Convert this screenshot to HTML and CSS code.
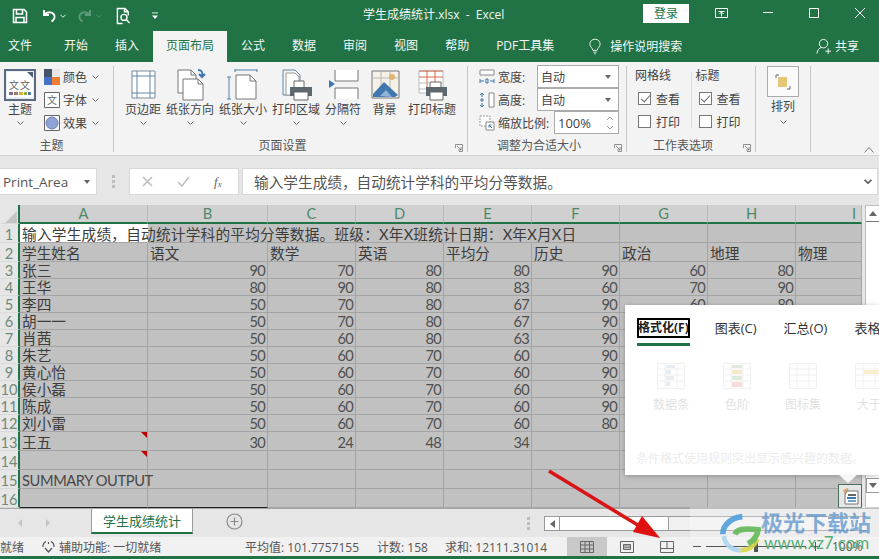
FILE: index.html
```html
<!DOCTYPE html>
<html lang="zh-CN">
<head>
<meta charset="utf-8">
<title>学生成绩统计.xlsx - Excel</title>
<link rel="stylesheet" href="styles.css">
</head>
<body>
<div class="app">
  <header class="titlebar">
    <div class="qat">
      <svg class="q-save" viewBox="0 0 16 16"><path d="M1.500 1.500h10.500l2.500 2.500v10.500h-13z"/><path d="M4.500 2v4h6V2M4 14.500v-5h8v5"/></svg>
      <svg class="q-undo" viewBox="0 0 16 16"><path d="M3 2v5h5M3.500 6.500C6 3.500 11 3.500 13 6.500c1.500 2.500 0 5.500-2.500 7"/></svg>
      <svg class="q-chev" viewBox="0 0 7 4"><path d="M.5.5l3 3 3-3"/></svg>
      <svg class="q-redo" viewBox="0 0 16 16"><path d="M13 2v5H8M12.500 6.500C10 3.500 5 3.500 3 6.500c-1.500 2.500 0 5.500 2.500 7"/></svg>
      <svg class="q-chev dim" viewBox="0 0 7 4"><path d="M.5.5l3 3 3-3"/></svg>
      <svg class="q-prev" viewBox="0 0 16 19"><path d="M7 17.500H1.500v-16h8l3.500 3.500v4M9 1.500V5h4"/><circle cx="8.500" cy="11" r="3.200"/><path d="M11 13.500l3.500 3.500"/></svg>
      <svg class="q-cust" viewBox="0 0 7 8"><path class="w" d="M0 1h7"/><path class="t" d="M0 4h7L3.500 8z"/></svg>
    </div>
    <div class="doc-title">学生成绩统计.xlsx&nbsp; - &nbsp;Excel</div>
    <div class="winctl">
      <button class="login">登录</button>
      <svg class="wc wc-r" viewBox="0 0 13 12"><path d="M.5 1.500h12v9H.5zM3.500 4.500h6M6.500 4.500v5M4.500 7l2-2 2 2"/></svg>
      <svg class="wc" viewBox="0 0 12 12"><path d="M1 5.500h10"/></svg>
      <svg class="wc" viewBox="0 0 12 12"><path d="M1.500 1.500h9v9h-9z"/></svg>
      <svg class="wc" viewBox="0 0 12 12"><path d="M1 1l10 10M11 1L1 11"/></svg>
    </div>
  </header>

  <nav class="tabs">
    <span class="tab first">文件</span>
    <span class="tab">开始</span>
    <span class="tab">插入</span>
    <span class="tab active">页面布局</span>
    <span class="tab">公式</span>
    <span class="tab">数据</span>
    <span class="tab">审阅</span>
    <span class="tab">视图</span>
    <span class="tab">帮助</span>
    <span class="tab">PDF工具集</span>
    <span class="tell">
      <svg class="bulb" viewBox="0 0 14 18"><path d="M4.500 13.500C4 10.500 1 9.500 1 6a6 5.500 0 0 1 12 0c0 3.500-3 4.500-3.500 7.500zM5 15.500h4M6 17.500h2"/></svg>
      操作说明搜索
    </span>
    <span class="share">
      <svg class="user" viewBox="0 0 16 17"><circle cx="8" cy="5.500" r="4.500"/><path d="M1 16c.5-4 2.500-6 5-6.500M10 13.500h6M13 10.500v6"/></svg>
      共享
    </span>
  </nav>

  <section class="ribbon">
    <div class="group g-theme">
      <div class="gbody themes">
        <div class="rbtn theme-btn">
          <svg class="ic-theme" viewBox="0 0 32 32"><path class="fr" d="M1 1h30v30H1z"/><path d="M3 3h21l5 5v20H3z" fill="#fff"/><path d="M23 3h6v6z" fill="#51607a"/><text x="5" y="20" class="gl">文</text><text x="16" y="20" class="gl">文</text><path d="M5 23h4v3H5z" fill="#7d6a9c"/><path d="M10 23h4v3h-4z" fill="#9c7d5f"/><path d="M15 23h4v3h-4z" fill="#d8b23a"/><path d="M20 23h3v3h-3z" fill="#8db04a"/><path d="M24 23h3v3h-3z" fill="#4f7fb0"/></svg>
          <span class="rlabel">主题</span>
          <svg class="chev" viewBox="0 0 7 4"><path d="M.5.5l3 3 3-3"/></svg>
        </div>
        <div class="theme-list">
          <div class="tline"><svg class="sw" viewBox="0 0 16 16"><path d="M0 0h8v8H0z" fill="#44546a"/><path d="M8 0h8v8H8z" fill="#e7e6e6"/><path d="M0 8h8v8H0z" fill="#4472c4"/><path d="M8 8h8v8H8z" fill="#ed7d31"/></svg><span>颜色</span><svg class="chev" viewBox="0 0 7 4"><path d="M.5.5l3 3 3-3"/></svg></div>
          <div class="tline"><svg class="sw" viewBox="0 0 16 16"><path d="M.5.5h15v15H.5z" fill="#fff" stroke="#666"/><text x="3" y="12" class="gl">文</text></svg><span>字体</span><svg class="chev" viewBox="0 0 7 4"><path d="M.5.5l3 3 3-3"/></svg></div>
          <div class="tline"><svg class="sw" viewBox="0 0 16 16"><path d="M.5.5h15v15H.5z" fill="#fff" stroke="#666"/><circle cx="8" cy="8" r="6" fill="#8ea4d6" stroke="#6a7fb5"/></svg><span>效果</span><svg class="chev" viewBox="0 0 7 4"><path d="M.5.5l3 3 3-3"/></svg></div>
        </div>
      </div>
      <div class="glabel">主题</div>
    </div>

    <div class="group g-page">
      <div class="gbody pagebtns">
        <div class="rbtn"><svg class="big" viewBox="0 0 32 32"><path d="M5 2h23v27H5z" fill="#fff" stroke="#7d8a96"/><path d="M5 7h23M5 24h23" stroke="#5f87ad"/><path d="M10 2v27M23 2v27" stroke="#5f87ad"/></svg><span class="rlabel">页边距</span><svg class="chev" viewBox="0 0 7 4"><path d="M.5.5l3 3 3-3"/></svg></div>
        <div class="rbtn"><svg class="big" viewBox="0 0 32 32"><path d="M4 1h13l5 5v18H4z" fill="#fff" stroke="#777"/><path d="M17 1v5h5" fill="none" stroke="#777"/><path d="M9 10h15l5 5v16H9z" fill="#fff" stroke="#777"/><path d="M24 10v5h5" fill="none" stroke="#777"/><path d="M24 1c4 0 5 3 4 6M25 5l3 3 3-3" fill="none" stroke="#3f77ae" stroke-width="2"/></svg><span class="rlabel">纸张方向</span><svg class="chev" viewBox="0 0 7 4"><path d="M.5.5l3 3 3-3"/></svg></div>
        <div class="rbtn"><svg class="big" viewBox="0 0 32 32"><path d="M2 8v22M0 8h4M0 30h4M8 1h22M8 0v3M30 0v3" fill="none" stroke="#4f7fb0"/><path d="M9 6h14l6 6v18H9z" fill="#fff" stroke="#777"/><path d="M23 6v6h6" fill="none" stroke="#777"/></svg><span class="rlabel">纸张大小</span><svg class="chev" viewBox="0 0 7 4"><path d="M.5.5l3 3 3-3"/></svg></div>
        <div class="rbtn"><svg class="big" viewBox="0 0 32 32"><path d="M3 1h12l5 5v20H3z" fill="none" stroke="#5f87ad"/><path d="M6 4h9l4 4v18H6z" fill="#fff" stroke="#999"/><path d="M14 12h10v7H14z" fill="#fff" stroke="#666"/><path d="M10 18h22v9H10z" fill="#5c6770"/><path d="M14 23h14v8H14z" fill="#fff" stroke="#666"/></svg><span class="rlabel">打印区域</span><svg class="chev" viewBox="0 0 7 4"><path d="M.5.5l3 3 3-3"/></svg></div>
        <div class="rbtn"><svg class="big" viewBox="0 0 32 32"><path d="M8 1v11h23V1M8 30V19h23v11" fill="#fff" stroke="#777"/><path d="M2 11l6 4-6 4z" fill="#3f77ae"/></svg><span class="rlabel">分隔符</span><svg class="chev" viewBox="0 0 7 4"><path d="M.5.5l3 3 3-3"/></svg></div>
        <div class="rbtn bg-btn"><svg class="big" viewBox="0 0 32 32"><path d="M3 2h27v27H3z" fill="#f6f1e6" stroke="#777"/><path d="M3 9h27M12 2v27M21 2v27" stroke="#b7b7b7"/><circle cx="23" cy="8" r="3" fill="#e2b46f"/><path d="M4 25l11-12 14 13-3 2H4z" fill="#3f77ae"/><path d="M11 27l6-6 6 7z" fill="#8fb4d6"/></svg><span class="rlabel">背景</span></div>
        <div class="rbtn"><svg class="big" viewBox="0 0 32 32"><path d="M3 2h24v22H3z" fill="#fff" stroke="#bbb"/><path d="M3 2h24M3 8h24M11 2v22M19 2v22" fill="none" stroke="#d46a4b"/><path d="M3 14h10M3 20h10" stroke="#bbb"/><path d="M14 13h11v7H14z" fill="#fff" stroke="#666"/><path d="M10 18h21v9H10z" fill="#5c6770"/><path d="M14 23h13v8H14z" fill="#fff" stroke="#666"/></svg><span class="rlabel">打印标题</span></div>
      </div>
      <div class="glabel shift">页面设置</div>
      <svg class="launch" viewBox="0 0 8 8"><path d="M.5 4V.5H7.500V7.500H4M2 2l4 4M3 6h3V3"/></svg>
    </div>

    <div class="group g-fit">
      <div class="gbody fit">
        <div class="fitrow">
          <svg class="fiticon" viewBox="0 0 16 16"><path d="M1 1h14v5H1z" fill="#fff" stroke="#888"/><path d="M1 12h4M11 12h4M1 10v4M15 10v4M7 10h2v4H7z" stroke="#3f77ae" fill="none"/></svg>
          <span class="fitlabel">宽度:</span>
          <span class="combo"><span>自动</span><i class="drop"></i></span>
        </div>
        <div class="fitrow">
          <svg class="fiticon" viewBox="0 0 16 16"><path d="M10 1h5v14h-5z" fill="#fff" stroke="#888"/><path d="M3 1v4M3 11v4M1 3l2-2 2 2M1 13l2 2 2-2M2 7h2v2H2z" stroke="#3f77ae" fill="none"/></svg>
          <span class="fitlabel">高度:</span>
          <span class="combo"><span>自动</span><i class="drop"></i></span>
        </div>
        <div class="fitrow">
          <svg class="fiticon" viewBox="0 0 16 16"><path d="M1 1h10v10H1z" fill="#fff" stroke="#999" stroke-dasharray="2 1"/><path d="M7 7h8v8H7z" fill="#fff" stroke="#888"/><path d="M10 10l3 3M10 12.500V10h2.500" stroke="#3f77ae" fill="none"/></svg>
          <span class="fitlabel wide">缩放比例:</span>
          <span class="combo spin"><span>100%</span><svg class="spinner" viewBox="0 0 8 16"><path d="M1 5l3-3 3 3M1 11l3 3 3-3"/></svg></span>
        </div>
      </div>
      <div class="glabel shift">调整为合适大小</div>
      <svg class="launch" viewBox="0 0 8 8"><path d="M.5 4V.5H7.500V7.500H4M2 2l4 4M3 6h3V3"/></svg>
    </div>

    <div class="group g-sheet">
      <div class="gbody opts">
        <div class="optcol">
          <div class="opthead">网格线</div>
          <label class="opt"><i class="cb on"></i>查看</label>
          <label class="opt"><i class="cb"></i>打印</label>
        </div>
        <div class="optcol second">
          <div class="opthead">标题</div>
          <label class="opt"><i class="cb on"></i>查看</label>
          <label class="opt"><i class="cb"></i>打印</label>
        </div>
      </div>
      <div class="glabel shift">工作表选项</div>
      <svg class="launch" viewBox="0 0 8 8"><path d="M.5 4V.5H7.500V7.500H4M2 2l4 4M3 6h3V3"/></svg>
    </div>

    <div class="group g-arr">
      <div class="arr-box"><svg class="arr-ic" viewBox="0 0 16 16"><path d="M1 4V1h3M15 12v3h-3" fill="none" stroke="#666"/><path d="M3 3h9v10H3z" fill="#e8c677"/></svg></div>
      <span class="rlabel arr-label">排列</span>
      <svg class="chev" viewBox="0 0 7 4"><path d="M.5.5l3 3 3-3"/></svg>
    </div>
    <svg class="collapse" viewBox="0 0 10 6"><path d="M.5 5.500l4.500-5 4.500 5"/></svg>
  </section>

  <section class="formula">
    <div class="namebox"><span>Print_Area</span><i class="drop"></i></div>
    <svg class="dots" viewBox="0 0 3 13"><path d="M0 0h3v3H0zM0 5h3v3H0zM0 10h3v3H0z"/></svg>
    <div class="fxbox">
      <svg class="fx-x" viewBox="0 0 11 11"><path d="M1 1l9 9M10 1l-9 9"/></svg>
      <svg class="fx-c" viewBox="0 0 13 11"><path d="M1 6l4 4 7-9"/></svg>
      <span class="fx">f<sub>x</sub></span>
    </div>
    <div class="finput"><span>输入学生成绩，自动统计学科的平均分等数据。</span><svg class="chev big-chev" viewBox="0 0 7 4"><path d="M.5.5l3 3 3-3"/></svg></div>
  </section>

  <section class="sheetarea">
    <table class="grid">
      <colgroup><col class="c0"><col class="ca"><col class="cb2"><col class="cn"><col class="cn"><col class="cn"><col class="cn"><col class="cn"><col class="cn"><col class="ci"></colgroup>
      <tr class="h0"><th class="corner"><svg viewBox="0 0 12 12"><path d="M12 0v12H0z"/></svg></th><th>A</th><th>B</th><th>C</th><th>D</th><th>E</th><th>F</th><th>G</th><th>H</th><th class="hi">I</th></tr>
      <tr class="r1"><th>1</th><td class="act nob"><span class="spill wide-t">输入学生成绩，自动统计学科的平均分等数据。班级：X年X班统计日期：X年X月X日</span></td><td class="nob"></td><td class="nob"></td><td class="nob"></td><td class="nob"></td><td></td><td></td><td></td><td></td></tr>
      <tr class="r2"><th>2</th><td>学生姓名</td><td>语文</td><td>数学</td><td>英语</td><td>平均分</td><td>历史</td><td>政治</td><td>地理</td><td>物理</td></tr>
      <tr class="rs"><th>3</th><td>张三</td><td class="n">90</td><td class="n">70</td><td class="n">80</td><td class="n">80</td><td class="n">90</td><td class="n">60</td><td class="n">80</td><td></td></tr>
      <tr class="rs"><th>4</th><td>王华</td><td class="n">80</td><td class="n">90</td><td class="n">80</td><td class="n">83</td><td class="n">60</td><td class="n">70</td><td class="n">90</td><td></td></tr>
      <tr class="rs"><th>5</th><td>李四</td><td class="n">50</td><td class="n">70</td><td class="n">80</td><td class="n">67</td><td class="n">90</td><td class="n">60</td><td class="n">80</td><td></td></tr>
      <tr class="rs"><th>6</th><td>胡一一</td><td class="n">50</td><td class="n">70</td><td class="n">80</td><td class="n">67</td><td class="n">90</td><td></td><td></td><td></td></tr>
      <tr class="rs"><th>7</th><td>肖茜</td><td class="n">50</td><td class="n">60</td><td class="n">80</td><td class="n">63</td><td class="n">90</td><td></td><td></td><td></td></tr>
      <tr class="rs"><th>8</th><td>朱艺</td><td class="n">50</td><td class="n">60</td><td class="n">70</td><td class="n">60</td><td class="n">90</td><td></td><td></td><td></td></tr>
      <tr class="rs"><th>9</th><td>黄心怡</td><td class="n">50</td><td class="n">60</td><td class="n">70</td><td class="n">60</td><td class="n">90</td><td></td><td></td><td></td></tr>
      <tr class="rs"><th>10</th><td>侯小磊</td><td class="n">50</td><td class="n">60</td><td class="n">70</td><td class="n">60</td><td class="n">90</td><td></td><td></td><td></td></tr>
      <tr class="rs"><th>11</th><td>陈成</td><td class="n">50</td><td class="n">60</td><td class="n">70</td><td class="n">60</td><td class="n">90</td><td></td><td></td><td></td></tr>
      <tr class="rs"><th>12</th><td>刘小雷</td><td class="n">50</td><td class="n">60</td><td class="n">70</td><td class="n">60</td><td class="n">80</td><td></td><td></td><td></td></tr>
      <tr class="rl"><th>13</th><td class="mark">王五</td><td class="n">30</td><td class="n">24</td><td class="n">48</td><td class="n">34</td><td></td><td></td><td></td><td></td></tr>
      <tr class="rl"><th>14</th><td class="mark"></td><td></td><td></td><td></td><td></td><td></td><td></td><td></td><td></td></tr>
      <tr class="rl"><th>15</th><td><span class="spill narrow-t">SUMMARY OUTPUT</span></td><td></td><td></td><td></td><td></td><td></td><td></td><td></td><td></td></tr>
      <tr class="rl last"><th>16</th><td class="dk"></td><td class="dk"></td><td></td><td></td><td></td><td></td><td></td><td></td><td></td></tr>
    </table>
    <div class="vscroll">
      <div class="vbtn"><i class="up"></i></div>
      <div class="vtrack"></div>
      <div class="vbtn"><i class="down"></i></div>
    </div>
  </section>

  <section class="sheetbar">
    <div class="navs"><i class="nl"></i><i class="nr"></i></div>
    <div class="sheet-tab">学生成绩统计</div>
    <svg class="addsheet" viewBox="0 0 17 17"><circle cx="8.500" cy="8.500" r="7.500"/><path d="M8.500 4.500v8M4.500 8.500h8"/></svg>
    <svg class="dots bar-dots" viewBox="0 0 3 13"><path d="M0 0h3v3H0zM0 5h3v3H0zM0 10h3v3H0z"/></svg>
    <div class="hscroll"><span class="harrow"><i></i></span><span class="hthumb"></span></div>
  </section>

  <footer class="status">
    <span class="st-ready">就绪</span>
    <span class="st-access"><svg class="acc" viewBox="0 0 15 15"><path d="M5 2.500A5.500 5.500 0 0 0 2 8M10 2.500A5.500 5.500 0 0 1 13 8M4 9l3.500 4L11 9M7.500 3v2"/></svg>辅助功能: 一切就绪</span>
    <span class="st-avg">平均值: 101.7757155</span>
    <span class="st-cnt">计数: 158</span>
    <span class="st-sum">求和: 12111.31014</span>
    <span class="view on"><svg viewBox="0 0 14 12"><path d="M.5.5h13v11H.5zM.5 4h13M.5 8h13M5 .5v11M9.500.5v11"/></svg></span>
    <span class="view"><svg viewBox="0 0 14 12"><path d="M.5.5h13v11H.5zM3.500 3.500h7v5h-7zM3.500 5h7M3.500 6.800h7"/></svg></span>
    <span class="view"><svg viewBox="0 0 14 12"><path d="M.5.5h13v11H.5zM7 .5v7M.5 7.500h13"/></svg></span>
    <span class="zoomer"><i class="zminus"></i><span class="zslider"><i class="zthumb"></i></span><i class="zplus"></i><span class="zpct">100%</span></span>
  </footer>
  <div class="bottomline"></div>

  <aside class="qa">
    <div class="qa-tabs">
      <span class="qa-tab sel"><b>格式化(F)</b></span>
      <span class="qa-tab">图表(C)</span>
      <span class="qa-tab">汇总(O)</span>
      <span class="qa-tab">表格(T)</span>
    </div>
    <div class="qa-items">
      <div class="qa-item"><svg viewBox="0 0 28 26"><path d="M.5.5h27v25H.5zM.5 6h27M.5 12h27M.5 18h27M8 .5v25M20 .5v25"/><path class="f1" d="M9 2h9v3H9zM9 7h5v4H9zM9 13h8v4H9zM9 19h4v4H9z"/></svg><span>数据条</span></div>
      <div class="qa-item"><svg viewBox="0 0 28 26"><path d="M.5.5h27v25H.5zM.5 6h27M.5 12h27M.5 18h27M8 .5v25M20 .5v25"/><path class="f2" d="M9 7h10v4H9z"/><path class="f3" d="M9 13h10v4H9zM9 2h10v3H9z"/><path class="f4" d="M9 19h10v5H9z"/></svg><span>色阶</span></div>
      <div class="qa-item"><svg viewBox="0 0 28 26"><path d="M.5.5h27v25H.5zM.5 6h27M.5 12h27M.5 18h27M8 .5v25M20 .5v25"/></svg><span>图标集</span></div>
      <div class="qa-item"><svg viewBox="0 0 28 26"><path d="M.5.5h27v25H.5zM.5 6h27M.5 12h27M.5 18h27M8 .5v25M20 .5v25"/><path class="f5" d="M9 7h18v4H9z"/></svg><span>大于</span></div>
    </div>
    <p class="qa-note">条件格式使用规则突出显示感兴趣的数据。</p>
  </aside>
  <i class="qa-tip"></i>
  <div class="qa-btn"><svg viewBox="0 0 19 19"><path d="M2 3l5-2 1 5-4 2z" fill="#e0a56e"/><path d="M6 4h11v13H4V8z" fill="#fff" stroke="#777"/><path d="M7 7h8v2H7z" fill="#666"/><path d="M6 10h9v2H6z" fill="#3f77ae"/><path d="M7 13h8v2H7z" fill="#6aa6c8"/></svg></div>

  <svg class="arrow" viewBox="0 0 879 559"><path d="M549 471l92 56" stroke="#d81414" stroke-width="3.500" fill="none"/><path d="M660 538l-27-6 9-16z" fill="#e01010"/></svg>

  <div class="wm">
    <svg class="wm-logo" viewBox="0 0 44 44"><path d="M24 5C12 6 3 14 3 24" stroke="#4f9fdc" stroke-width="6" fill="none"/><path d="M4 26c2 10 9 15 18 15" stroke="#a9d6ee" stroke-width="5" fill="none"/><path d="M22 41c9 0 15-4 18-12" stroke="#d8d84a" stroke-width="5" fill="none"/><path d="M16 24c2-5 8-7 25-5-1 6-5 12-11 15" stroke="#65b957" stroke-width="6" fill="none"/></svg>
    <span class="wm-name">极光下载站</span>
    <span class="wm-url">www.xz7.com</span>
  </div>
</div>
</body>
</html>
```
FILE: styles.css
```css
* { box-sizing: border-box; }
html, body { margin: 0; padding: 0; }
body { width: 879px; height: 559px; overflow: hidden; font-family: "Open Sans", "Noto Sans CJK SC", sans-serif; font-size: 12px; color: #444; }
svg { display: block; flex: none; }
i { display: block; font-style: normal; }
.app { position: relative; width: 879px; height: 559px; overflow: hidden; background: #e6e6e6; }

/* title */
.titlebar { height: 31px; background: #217346; display: flex; align-items: center; position: relative; color: #fff; }
.qat { display: flex; align-items: center; padding-left: 12px; }
.qat svg { fill: none; stroke: #fff; stroke-width: 1.5; }
.q-save { width: 16px; height: 16px; margin-right: 13px; }
.q-undo { width: 16px; height: 16px; stroke-width: 2 !important; margin-right: 3px; }
.q-chev { width: 6px; height: 4px; stroke-width: 1 !important; margin-right: 11px; }
.q-chev.dim, .q-redo { stroke: #5f9a7c !important; }
.q-redo { width: 16px; height: 16px; stroke-width: 2 !important; margin-right: 3px; }
.q-chev.dim { margin-right: 14px; }
.q-prev { width: 15px; height: 18px; margin-right: 21px; }
.q-cust { width: 6px; height: 7px; stroke-width: 1 !important; }
.q-cust .t { fill: #fff; stroke: none; }
.doc-title { position: absolute; left: 363px; top: 5px; font-size: 12px; line-height: 20px; white-space: nowrap; color: #f2f7f4; }
.winctl { margin-left: auto; display: flex; align-items: center; padding-right: 13px; }
.login { width: 46px; height: 19px; border: 0; background: #fff; color: #217346; font: 12px/19px "Open Sans", "Noto Sans CJK SC", sans-serif; padding: 0; margin-right: 26px; margin-top: -4px; }
.wc { width: 12px; height: 12px; margin-left: 34px; margin-top: -5px; fill: none; stroke: #fff; stroke-width: 1; }
.wc-r { width: 13px; margin-left: 0; }

/* tabs */
.tabs { height: 31px; background: #217346; display: flex; gap: 1px; padding-left: 8px; color: #f4f8f6; position: relative; }
.tab { padding: 0 13px; line-height: 30px; white-space: nowrap; }
.tab.first { padding-left: 0; margin-right: 5px; }
.tab.active { background: #f3f3f3; color: #217346; }
.tell { display: flex; align-items: center; gap: 9px; margin-left: 21px; padding-bottom: 1px; white-space: nowrap; }
.bulb { width: 12px; height: 17px; fill: none; stroke: #fff; stroke-width: 1; }
.share { display: flex; align-items: center; gap: 4px; position: absolute; left: 816px; top: 5px; height: 20px; white-space: nowrap; }
.user { width: 15px; height: 17px; fill: none; stroke: #fff; stroke-width: 1; }

/* ribbon */
.ribbon { height: 94px; background: #f3f3f3; border-bottom: 1px solid #d4d4d4; display: flex; padding-top: 4px; position: relative; }
.group { position: relative; height: 86px; border-right: 1px solid #c6c6c6; display: flex; flex-direction: column; color: #444; }
.gbody { height: 71px; display: flex; }
.glabel { height: 15px; line-height: 17px; text-align: center; color: #555; white-space: nowrap; }
.glabel.shift { padding-right: 16px; }
.launch { position: absolute; right: 4px; bottom: 0; width: 8px; height: 8px; fill: none; stroke: #777; stroke-width: .8; }
.rbtn { display: flex; flex-direction: column; align-items: center; padding-top: 3px; white-space: nowrap; }
.rlabel { line-height: 18px; height: 18px; }
.chev { width: 7px; height: 4px; margin-top: 2px; fill: none; stroke: #666; stroke-width: 1; }
.big { width: 32px; height: 32px; }
.gl { font: 10px "Noto Sans CJK SC", sans-serif; fill: #666; }

.g-theme { width: 114px; }
.g-theme .glabel { padding-right: 10px; }
.themes { padding-left: 4px; }
.theme-btn { width: 32px; }
.ic-theme { width: 32px; height: 32px; }
.ic-theme .fr { fill: #e8edf3; stroke: #5a6a80; stroke-width: 2; }
.theme-list { margin-left: 8px; padding-top: 3px; display: flex; flex-direction: column; gap: 7px; }
.tline { display: flex; align-items: center; height: 16px; }
.sw { width: 16px; height: 16px; margin-right: 3px; }
.tline .chev { margin: 0 0 0 5px; }

.g-page { width: 354px; }
.pagebtns { padding-left: 11px; gap: 5px; }
.bg-btn { margin: 0 2.5px; }

.g-fit { width: 159px; }
.fit { flex-direction: column; padding-left: 11px; margin-top: -1px; height: 72px; }
.fitrow { display: flex; align-items: center; height: 23px; width: 140px; }
.fiticon { width: 16px; height: 16px; margin-right: 3px; }
.fitlabel { width: 39px; white-space: nowrap; }
.fitlabel.wide { width: 56px; }
.combo { flex: 1; height: 23px; background: #fff; border: 1px solid #ababab; display: flex; align-items: center; justify-content: space-between; padding: 0 7px 0 3px; }
.drop { width: 0; height: 0; border: 3.500px solid transparent; border-top: 4px solid #666; border-bottom: 0; }
.combo.spin { font-size: 13px; padding-right: 4px; }
.spinner { width: 8px; height: 16px; fill: none; stroke: #888; stroke-width: .8; }

.g-sheet { width: 129px; }
.opts { padding-left: 8px; }
.optcol { width: 56px; }
.optcol.second { width: 60px; margin-left: 5px; position: relative; }
.optcol.second::before { content: ""; position: absolute; left: -5px; top: 6px; height: 56px; border-left: 1px solid #dcdcdc; }
.opthead { height: 20px; line-height: 20px; }
.opt { display: flex; align-items: center; height: 23px; padding-left: 3px; gap: 5px; }
.opthead + .opt { margin-top: 1px; }
.cb { width: 13px; height: 13px; background: #fff; border: 1px solid #777; position: relative; }
.cb.on::after { content: ""; position: absolute; left: 3.500px; top: 0; width: 4px; height: 8px; border: solid #666; border-width: 0 1px 1px 0; transform: rotate(42deg); }

.g-arr { width: 55px; align-items: center; }
.arr-box { width: 32px; height: 31px; border: 1px solid #aaa; background: #fafafa; display: flex; align-items: center; justify-content: center; }
.arr-ic { width: 16px; height: 16px; }
.arr-label { margin-top: 1px; }
.g-arr .chev { margin-top: 4px; }
.collapse { position: absolute; right: 5px; bottom: 2px; width: 10px; height: 6px; fill: none; stroke: #777; stroke-width: 1; }

/* formula bar */
.formula { height: 49px; display: flex; align-items: flex-start; padding-top: 12px; background: #e6e6e6; }
.namebox { width: 97px; height: 27px; background: #fff; border: 1px solid #d8d8d8; border-left: 0; display: flex; align-items: center; justify-content: space-between; padding: 0 6px 0 3px; font-size: 13.500px; color: #555; }
.dots { width: 3px; height: 13px; fill: #bdbdbd; margin: 7px 14px 0 15px; }
.fxbox { width: 110px; height: 27px; background: #fff; border: 1px solid #d8d8d8; display: flex; align-items: center; margin-right: 3px; padding-left: 12px; }
.fx-x { width: 11px; height: 11px; fill: none; stroke: #bcbcbc; stroke-width: 1.500; margin-right: 24px; }
.fx-c { width: 13px; height: 11px; fill: none; stroke: #bcbcbc; stroke-width: 1.500; margin-right: 24px; }
.fx { font: italic 13px/1 "Liberation Serif", serif; color: #666; }
.fx sub { font-size: 9px; vertical-align: -1px; }
.finput { width: 636px; height: 27px; background: #fff; border: 1px solid #d8d8d8; display: flex; align-items: center; justify-content: space-between; padding: 0 5px 0 11px; font-size: 14.670px; color: #555; }
.big-chev { width: 8px; height: 5px; margin: 0; stroke-width: 1.500; }

/* grid */
.sheetarea { height: 303px; display: flex; background: #e6e6e6; }
.grid { width: 862px; height: 303px; border-collapse: separate; border-spacing: 0; table-layout: fixed; background: #c1c1c1; font: 400 14.670px/14px Lato, "Noto Sans CJK SC", sans-serif; color: #3c3c3c; }
.c0 { width: 20px; }
.ca { width: 128px; }
.cb2 { width: 120px; }
.cn { width: 88px; }
.ci { width: 66px; }
.grid th, .grid td { padding: 0; overflow: visible; white-space: nowrap; }
.grid td { position: relative; border-right: 1px solid #a4a4a4; border-bottom: 1px solid #a4a4a4; padding-left: 2px; vertical-align: bottom; }
.grid tr > th:first-child { background: #e6e6e6; color: #6f8a7c; font-weight: 400; border-right: 2px solid #217346; text-align: center; font-size: 14.670px; vertical-align: bottom; border-bottom: 1px solid #dadada; }
.h0 { height: 19px; }
.h0 th { background: #d0d0d0; color: #4e8a6a; font-weight: 400; border-right: 1px solid #b8b8b8; border-bottom: 2px solid #217346; text-align: center; font-size: 14.670px; vertical-align: middle; }
.h0 th.hi { text-align: right; padding-right: 5px; }
.grid .corner { background: #e6e6e6; border-right: 1px solid #c8c8c8; border-bottom: 2px solid #e6e6e6; }
.corner svg { width: 12px; height: 12px; margin: 1px 1px 0 auto; fill: #c4c4c4; }
.r1 { height: 19px; }
.r2 { height: 19px; }
.rs { height: 17px; }
.rl { height: 19px; }
.grid .act { background: #fff; }
.grid .nob { border-right-color: transparent; }
.grid .n { text-align: right; padding: 0 2px 0 0; letter-spacing: -.7px; color: #505050; }
.spill { position: relative; }
.wide-t { letter-spacing: .22px; }
.narrow-t { letter-spacing: -.4px; color: #484848; }
.mark::after { content: ""; position: absolute; right: 0; top: 0; border: 3.500px solid; border-color: #c00000 #c00000 transparent transparent; }
.grid .dk { border-bottom-color: #222; }

.vscroll { width: 14px; margin-left: 3px; display: flex; flex-direction: column; background: #fff; border: 1px solid #bdbdbd; border-right: 0; }
.vbtn { height: 16px; background: #fff; display: flex; align-items: center; justify-content: center; }
.vbtn:first-child { border-bottom: 1px solid #777; }
.vtrack { flex: 1; }
.up { border: 4px solid transparent; border-bottom: 5px solid #666; border-top: 0; }
.down { border: 4px solid transparent; border-top: 5px solid #666; border-bottom: 0; }
.vbtn:last-child { border: 1px solid #999; border-right: 0; height: 15px; margin-bottom: 14px; }

/* sheet tabs */
.sheetbar { height: 29px; border-top: 1px solid #a6a6a6; display: flex; align-items: flex-start; background: #e6e6e6; }
.navs { width: 91px; height: 27px; display: flex; align-items: center; padding-left: 18px; gap: 24px; }
.nl { border: 4px solid transparent; border-right: 4px solid #c4c4c4; border-left: 0; }
.nr { border: 4px solid transparent; border-left: 4px solid #c4c4c4; border-right: 0; }
.sheet-tab { width: 102px; height: 25px; background: #fff; border: 1px solid #9b9b9b; border-top: 0; border-bottom: 2px solid #217346; text-align: center; line-height: 24px; font-size: 13px; color: #217346; }
.addsheet { width: 17px; height: 17px; margin: 4px 0 0 33px; fill: none; stroke: #8a8a8a; stroke-width: 1.200; }
.bar-dots { margin: 8px 0 0 284px; fill: #bdbdbd; }
.hscroll { width: 322px; height: 15px; margin: 7px 0 0 14px; display: flex; background: #f0f0f0; border: 1px solid #9a9a9a; border-right: 0; }
.harrow { width: 15px; border-right: 1px solid #9a9a9a; background: #fff; display: flex; align-items: center; justify-content: center; }
.harrow i { border: 4px solid transparent; border-right: 5px solid #666; border-left: 0; }
.hthumb { width: 109px; background: #fff; border-right: 1px solid #9a9a9a; }

/* status */
.status { height: 19px; background: #f1f1f1; display: flex; align-items: center; position: relative; white-space: nowrap; color: #555; }
.st-ready { width: 41px; }
.st-access { display: flex; align-items: center; gap: 3px; width: 204px; }
.acc { width: 15px; height: 15px; fill: none; stroke: #555; stroke-width: 1.200; }
.st-avg { width: 132px; }
.st-cnt { width: 68px; }
.st-sum { width: 122px; }
.view { width: 40px; height: 19px; display: flex; align-items: center; justify-content: center; }
.view.on { background: #c8c8c8; }
.view svg { width: 14px; height: 12px; fill: none; stroke: #666; stroke-width: 1; }
.zoomer { display: flex; align-items: center; margin-left: 6px; }
.zminus { width: 8px; height: 1px; background: #555; }
.zslider { width: 100px; height: 1px; background: #555; margin: 0 5px; position: relative; }
.zthumb { position: absolute; left: 48px; top: -5px; width: 4px; height: 11px; background: #555; }
.zplus { width: 9px; height: 9px; background: linear-gradient(#555,#555) center/9px 1px no-repeat, linear-gradient(#555,#555) center/1px 9px no-repeat; }
.zpct { margin-left: 12px; }
.bottomline { height: 3px; background: #217346; }

/* quick analysis */
.qa { position: absolute; left: 625px; top: 305px; width: 254px; height: 170px; background: #fff; box-shadow: 0 1px 5px rgba(0,0,0,.25); overflow: hidden; }
.qa-tabs { display: flex; padding: 13px 0 0 12px; height: 41px; color: #333; white-space: nowrap; font-size: 13px; }
.qa-tab { margin-right: 27px; line-height: 20px; }
.qa-tab.sel { border-bottom: 3px solid #217346; height: 28px; padding: 0 1px; margin-right: 25px; font-size: 12px; }
.qa-tab.sel b { display: block; height: 18px; line-height: 17px; margin-top: 1px; outline: 2px solid #000; outline-offset: -1px; color: #222; }
.qa-items { display: flex; padding: 17px 0 0 28px; gap: 30px; }
.qa-item { width: 36px; flex: none; display: flex; flex-direction: column; align-items: center; color: #e2e2e2; white-space: nowrap; }
.qa-item svg { width: 28px; height: 26px; fill: none; stroke: #f0f0f0; stroke-width: 1; margin-bottom: 6px; }
.qa-item .f1 { fill: #e6edf4; stroke: none; }
.qa-item .f2 { fill: #f5e9c8; stroke: none; }
.qa-item .f3 { fill: #dfeadb; stroke: none; }
.qa-item .f4 { fill: #f7dcdc; stroke: none; }
.qa-item .f5 { fill: #f7efd0; stroke: none; }
.qa-note { margin: 38px 0 0 11px; color: #ececec; white-space: nowrap; line-height: 16px; }
.qa-tip { position: absolute; left: 838px; top: 474px; border: 10px solid transparent; border-top: 9px solid #f8f8f8; border-bottom: 0; }
.qa-btn { position: absolute; left: 838px; top: 484px; width: 24px; height: 24px; background: #e6e6e6; border: 1px solid #47705a; display: flex; align-items: center; justify-content: center; }
.qa-btn svg { width: 19px; height: 19px; }

/* overlays */
.arrow { position: absolute; left: 0; top: 0; width: 879px; height: 559px; pointer-events: none; }
.wm { position: absolute; left: 720px; top: 507px; width: 159px; height: 50px; }
.wm::before { content: ""; position: absolute; left: -30px; top: 0; width: 189px; height: 32px; background: rgba(255,255,255,.28); }
.wm-logo { position: absolute; left: 0; top: 5px; width: 41px; height: 41px; opacity: .9; }
.wm-name { position: absolute; left: 41px; top: 0; font: 700 22px/28px "Noto Sans CJK SC", sans-serif; color: rgba(80,140,200,.7); white-space: nowrap; }
.wm-url { position: absolute; left: 44px; top: 26px; font: 400 17px/20px Lato, sans-serif; color: #55ae78; white-space: nowrap; }
```
